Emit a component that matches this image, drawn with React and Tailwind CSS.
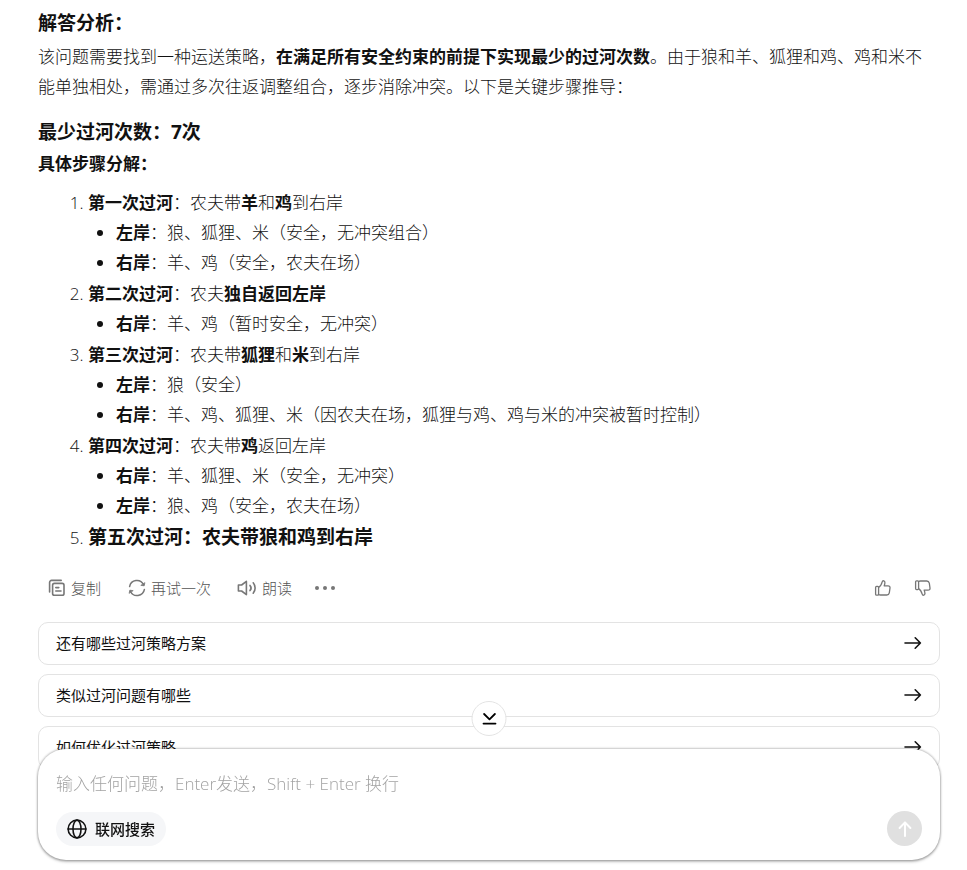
import React, { useState } from "react";

const steps = [
  {
    title: "第一次过河",
    action: <>：农夫带<b>羊</b>和<b>鸡</b>到右岸</>,
    banks: [
      ["左岸", "：狼、狐狸、米（安全，无冲突组合）"],
      ["右岸", "：羊、鸡（安全，农夫在场）"],
    ],
  },
  {
    title: "第二次过河",
    action: <>：农夫<b>独自返回左岸</b></>,
    banks: [["右岸", "：羊、鸡（暂时安全，无冲突）"]],
  },
  {
    title: "第三次过河",
    action: <>：农夫带<b>狐狸</b>和<b>米</b>到右岸</>,
    banks: [
      ["左岸", "：狼（安全）"],
      ["右岸", "：羊、鸡、狐狸、米（因农夫在场，狐狸与鸡、鸡与米的冲突被暂时控制）"],
    ],
  },
  {
    title: "第四次过河",
    action: <>：农夫带<b>鸡</b>返回左岸</>,
    banks: [
      ["右岸", "：羊、狐狸、米（安全，无冲突）"],
      ["左岸", "：狼、鸡（安全，农夫在场）"],
    ],
  },
];

const suggestions = ["还有哪些过河策略方案", "类似过河问题有哪些", "如何优化过河策略"];

const Icon = ({ className = "size-[18px]", width = 1.4, children }) => (
  <svg
    className={className}
    viewBox="0 0 18 18"
    fill="none"
    stroke="currentColor"
    strokeWidth={width}
    strokeLinecap="round"
    strokeLinejoin="round"
    aria-hidden="true"
  >
    {children}
  </svg>
);

const CopyIcon = () => (
  <Icon className="size-[18px] text-[#777]" width={1.6}>
    <rect x="4.6" y="4.4" width="11.4" height="11.8" rx="1.8" />
    <path d="M1.6 13V3.4a2 2 0 0 1 2-2h9.6M7.8 8.6h3M7.8 12h5.2" />
  </Icon>
);

const RetryIcon = () => (
  <Icon className="size-[18px] text-[#777]" width={1.5}>
    <path d="M1.6 7.6a7.4 7.4 0 0 1 14-1.8M16.4 10.4a7.4 7.4 0 0 1-14 1.8" />
    <path d="M13.2 6.4l3 .4.6-2.8z M4.8 11.6l-3-.4-.6 2.8z" fill="currentColor" strokeWidth="0.8" />
  </Icon>
);

const SpeakerIcon = () => (
  <svg className="h-[18px] w-5 text-[#777]" viewBox="0 0 20 18" fill="none" stroke="currentColor" strokeWidth="1.6" strokeLinecap="round" strokeLinejoin="round" aria-hidden="true">
    <path d="M1.4 6v6h3.2l4.8 3.6V2.4L4.6 6zM13 6.4a4 4 0 0 1 0 5.2M16.2 3.8a8 8 0 0 1 0 10.4" />
  </svg>
);

const ThumbIcon = ({ down }) => (
  <Icon className={down ? "size-[18px] -scale-y-100" : "size-[18px]"} width={1.3}>
    <rect x="1.6" y="7.4" width="3" height="8.8" rx="1" />
    <path d="M4.6 8.4c2.2-1.2 3-3.4 3.6-5.6.4-1.6 2.8-1.4 2.7.8 0 1.2-.3 2.2-.7 3.2h3.8c1.4 0 2.2.9 2 2.2l-.7 4.8c-.3 1.4-1.2 2.2-2.5 2.2H6.5c-.8 0-1.4-.2-1.9-.6" />
  </Icon>
);

const ArrowIcon = () => (
  <Icon width={1.6}>
    <path d="M1 9h15.4M11.2 3.8L16.4 9l-5.2 5.2" />
  </Icon>
);

const App = () => {
  const [message, setMessage] = useState("");
  const [liked, setLiked] = useState(null);

  return (
    <div className="min-h-screen bg-white pt-2 pr-[27px] pb-24 pl-[38px] font-['Open_Sans','Noto_Sans_CJK_SC',sans-serif] text-[17px] leading-[30px] font-light text-[#111]">
      <article lang="zh-CN" className="[&_b]:font-bold">
        <h3 className="text-[19px] leading-[30px] font-bold">解答分析：</h3>
        <p className="mt-1 pr-1">
          该问题需要找到一种运送策略，<b>在满足所有安全约束的前提下实现最少的过河次数</b>
          。由于狼和羊、狐狸和鸡、鸡和米不能单独相处，需通过多次往返调整组合，逐步消除冲突。以下是关键步骤推导：
        </p>
        <h3 className="mt-[15px] text-[19px] leading-[30px] font-bold">最少过河次数：7次</h3>
        <p className="mt-0.5 font-bold">具体步骤分解：</p>

        <ol className="mt-[9px] list-decimal space-y-px pl-[50px]">
          {steps.map((step) => (
            <li key={step.title}>
              <b>{step.title}</b>
              {step.action}
              <ul className="list-disc pl-7">
                {step.banks.map(([bank, state]) => (
                  <li key={bank}>
                    <b>{bank}</b>
                    {state}
                  </li>
                ))}
              </ul>
            </li>
          ))}
          <li>
            <b className="text-[19px]">第五次过河：农夫带狼和鸡到右岸</b>
          </li>
        </ol>
      </article>

      <div className="mt-[21px] flex h-7 items-center pr-2 pl-2.5 text-[15px] text-[#555]">
        <button className="flex items-center gap-[5px]">
          <CopyIcon />
          复制
        </button>
        <button className="ml-[27px] flex items-center gap-[5px]">
          <RetryIcon />
          再试一次
        </button>
        <button className="ml-[26px] flex items-center gap-[5px]">
          <SpeakerIcon />
          朗读
        </button>
        <button className="ml-[23px] flex gap-1 text-[#777]" aria-label="更多">
          <span className="size-1 rounded-full bg-current" />
          <span className="size-1 rounded-full bg-current" />
          <span className="size-1 rounded-full bg-current" />
        </button>
        <div className="ml-auto flex gap-[22px] text-[#777]">
          <button aria-label="赞" aria-pressed={liked === true} onClick={() => setLiked(true)}>
            <ThumbIcon />
          </button>
          <button aria-label="踩" aria-pressed={liked === false} onClick={() => setLiked(false)}>
            <ThumbIcon down />
          </button>
        </div>
      </div>

      <div className="mt-5 flex flex-col gap-[9px]">
        {suggestions.map((text) => (
          <button
            key={text}
            onClick={() => setMessage(text)}
            className="flex h-[43px] items-center justify-between rounded-[10px] border border-[#e3e3e3] px-[17px] pb-px text-[15px] font-normal"
          >
            {text}
            <ArrowIcon />
          </button>
        ))}
      </div>

      <div className="fixed right-[27px] bottom-2.5 left-[38px] rounded-[28px] bg-white px-[18px] pt-5 pb-3.5 shadow-[0_0_2px_1px_rgba(0,0,0,0.22),0_2px_3px_0_rgba(0,0,0,0.22)]">
        <button
          aria-label="回到底部"
          className="absolute -top-12 left-1/2 flex size-[35px] -translate-x-1/2 items-center justify-center rounded-full border border-[#e3e3e3] bg-white text-black"
        >
          <Icon width={1.8}>
            <path d="M3.6 4L9 9.4 14.4 4M3 13.6h12" />
          </Icon>
        </button>
        <input
          type="text"
          aria-label="输入任何问题"
          placeholder="输入任何问题，Enter发送，Shift + Enter 换行"
          value={message}
          onChange={(e) => setMessage(e.target.value)}
          className="block h-[30px] w-full text-[17px] outline-none placeholder:text-[#a3a3a3]"
        />
        <div className="mt-3 flex items-center justify-between">
          <button className="flex h-[34px] items-center gap-2 rounded-full bg-[#f5f6f8] px-[11px] text-[15px] font-medium text-[#111]">
            <Icon className="size-5">
              <circle cx="9" cy="9" r="8" />
              <ellipse cx="9" cy="9" rx="3.6" ry="8" />
              <path d="M1 9h16" />
            </Icon>
            联网搜索
          </button>
          <button aria-label="发送" className="flex size-[35px] items-center justify-center rounded-full bg-[#e0e0e0] text-white">
            <Icon width={2}>
              <path d="M9 16V2.6M3.6 8L9 2.4 14.4 8" />
            </Icon>
          </button>
        </div>
      </div>
    </div>
  );
};

export default App;
